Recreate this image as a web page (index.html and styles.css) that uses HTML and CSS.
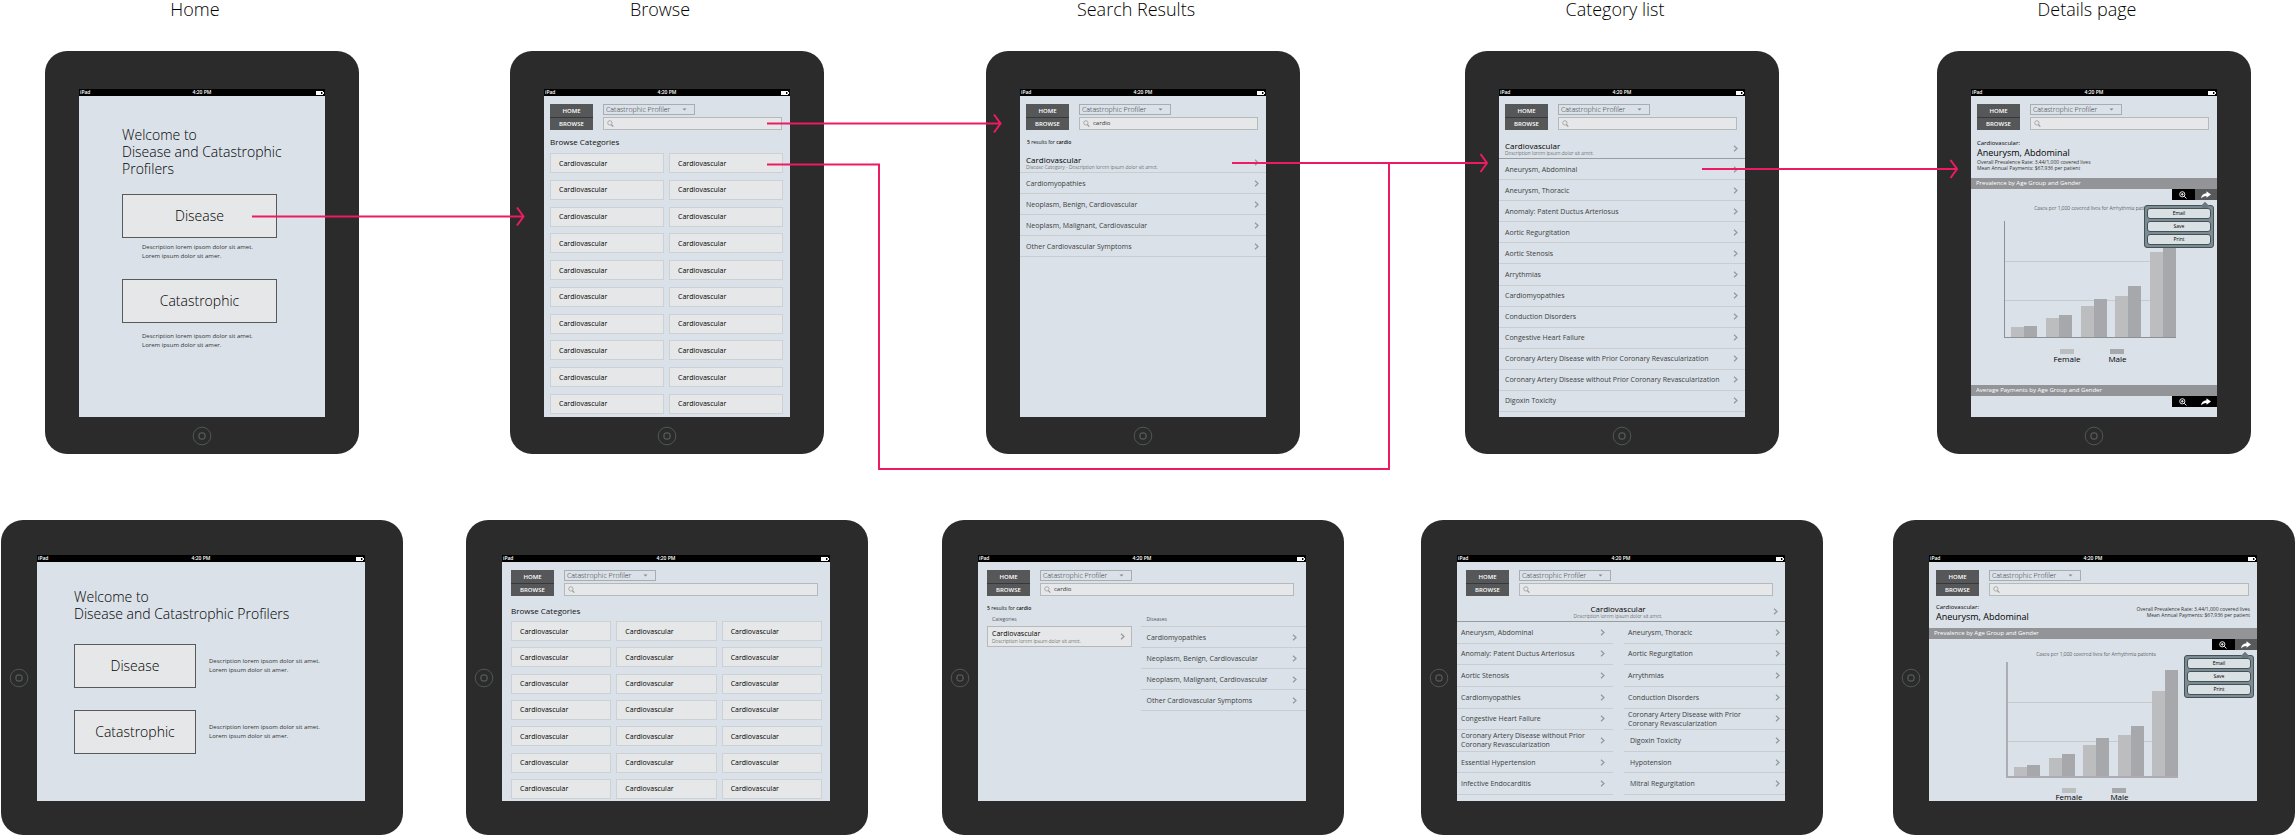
FILE: index.html
```html
<!DOCTYPE html>
<html lang="en">
<head>
<meta charset="utf-8">
<title>Profiler screen flow</title>
<link rel="stylesheet" href="styles.css">
</head>
<body>
<svg class="sprite" aria-hidden="true">
  <symbol id="chevron" viewBox="0 0 5 7"><path d="M1 .8 4 3.5 1 6.2" fill="none" stroke="currentColor" stroke-width="1.200"/></symbol>
  <symbol id="caret" viewBox="0 0 5 3"><path d="M.5 .5H4.500L2.500 2.500Z" fill="currentColor"/></symbol>
  <symbol id="search" viewBox="0 0 8 8"><circle cx="3.300" cy="3.300" r="2.500" fill="none" stroke="currentColor" stroke-width=".8"/><path d="M5 5.200 7.200 7.500" stroke="currentColor" stroke-width="1.300"/></symbol>
  <symbol id="zoom" viewBox="0 0 8 8"><circle cx="3.300" cy="3.300" r="2.600" fill="none" stroke="currentColor" stroke-width=".9"/><path d="M2 3.300H4.600M3.300 2V4.600M5.200 5.200 7.500 7.500" fill="none" stroke="currentColor" stroke-width=".9"/></symbol>
  <symbol id="share" viewBox="0 0 10 8"><path d="M0 7.500C.4 4.200 2.300 2.300 5.500 2.200V.3L10 3.600 5.500 6.800V4.900C3.300 4.800 1.600 5.600 0 7.500Z" fill="currentColor"/></symbol>
  <symbol id="battery" viewBox="0 0 8 4"><path d="M0 0H7V1H8V3H7V4H0Z" fill="#fff"/><path d="M5 1H6.400V3H5Z" fill="#000"/></symbol>
  <symbol id="homekey" viewBox="0 0 20 20"><circle cx="10" cy="10" r="8.800" fill="none" stroke="#5c5f60" stroke-width=".8"/><rect x="7" y="7" width="6" height="6" rx="1.800" fill="none" stroke="#6d7071" stroke-width=".9"/></symbol>
</svg>
<main class="board">

  <section class="column">
    <h2 class="title">Home</h2>
    <article class="device portrait">
      <div class="screen">
        <div class="status"><span>iPad</span><time>4:20 PM</time><svg class="battery"><use href="#battery"/></svg></div>
        <div class="welcome">
          <h1>Welcome to<br>Disease and Catastrophic Profilers</h1>
          <div class="choice"><button type="button">Disease</button><p>Description lorem ipsom dolor sit amet.<br>Lorem ipsum dolor sit amer.</p></div>
          <div class="choice low"><button type="button">Catastrophic</button><p>Description lorem ipsom dolor sit amet.<br>Lorem ipsum dolor sit amer.</p></div>
        </div>
      </div>
      <svg class="homekey"><use href="#homekey"/></svg>
    </article>
    <article class="device landscape">
      <svg class="homekey"><use href="#homekey"/></svg>
      <div class="screen">
        <div class="status"><span>iPad</span><time>4:20 PM</time><svg class="battery"><use href="#battery"/></svg></div>
        <div class="welcome">
          <h1>Welcome to<br>Disease and Catastrophic Profilers</h1>
          <div class="choice"><button type="button">Disease</button><p>Description lorem ipsom dolor sit amet.<br>Lorem ipsum dolor sit amer.</p></div>
          <div class="choice"><button type="button">Catastrophic</button><p>Description lorem ipsom dolor sit amet.<br>Lorem ipsum dolor sit amer.</p></div>
        </div>
      </div>
    </article>
  </section>

  <section class="column">
    <h2 class="title">Browse</h2>
    <article class="device portrait">
      <div class="screen">
        <div class="status"><span>iPad</span><time>4:20 PM</time><svg class="battery"><use href="#battery"/></svg></div>
        <header class="top">
          <nav><button type="button">HOME</button><button type="button">BROWSE</button></nav>
          <div class="finder"><div class="picker"><select aria-label="Profiler"><option>Catastrophic Profiler</option></select><svg><use href="#caret"/></svg></div><label class="search"><svg><use href="#search"/></svg><input type="text" aria-label="Search"></label></div>
        </header>
        <h3 class="heading">Browse Categories</h3>
        <div class="tiles">
          <button type="button">Cardiovascular</button><button type="button">Cardiovascular</button>
          <button type="button">Cardiovascular</button><button type="button">Cardiovascular</button>
          <button type="button">Cardiovascular</button><button type="button">Cardiovascular</button>
          <button type="button">Cardiovascular</button><button type="button">Cardiovascular</button>
          <button type="button">Cardiovascular</button><button type="button">Cardiovascular</button>
          <button type="button">Cardiovascular</button><button type="button">Cardiovascular</button>
          <button type="button">Cardiovascular</button><button type="button">Cardiovascular</button>
          <button type="button">Cardiovascular</button><button type="button">Cardiovascular</button>
          <button type="button">Cardiovascular</button><button type="button">Cardiovascular</button>
          <button type="button">Cardiovascular</button><button type="button">Cardiovascular</button>
        </div>
      </div>
      <svg class="homekey"><use href="#homekey"/></svg>
    </article>
    <article class="device landscape">
      <svg class="homekey"><use href="#homekey"/></svg>
      <div class="screen">
        <div class="status"><span>iPad</span><time>4:20 PM</time><svg class="battery"><use href="#battery"/></svg></div>
        <header class="top">
          <nav><button type="button">HOME</button><button type="button">BROWSE</button></nav>
          <div class="finder"><div class="picker"><select aria-label="Profiler"><option>Catastrophic Profiler</option></select><svg><use href="#caret"/></svg></div><label class="search"><svg><use href="#search"/></svg><input type="text" aria-label="Search"></label></div>
        </header>
        <h3 class="heading">Browse Categories</h3>
        <div class="tiles">
          <button type="button">Cardiovascular</button><button type="button">Cardiovascular</button><button type="button">Cardiovascular</button>
          <button type="button">Cardiovascular</button><button type="button">Cardiovascular</button><button type="button">Cardiovascular</button>
          <button type="button">Cardiovascular</button><button type="button">Cardiovascular</button><button type="button">Cardiovascular</button>
          <button type="button">Cardiovascular</button><button type="button">Cardiovascular</button><button type="button">Cardiovascular</button>
          <button type="button">Cardiovascular</button><button type="button">Cardiovascular</button><button type="button">Cardiovascular</button>
          <button type="button">Cardiovascular</button><button type="button">Cardiovascular</button><button type="button">Cardiovascular</button>
          <button type="button">Cardiovascular</button><button type="button">Cardiovascular</button><button type="button">Cardiovascular</button>
        </div>
      </div>
    </article>
  </section>

  <section class="column">
    <h2 class="title">Search Results</h2>
    <article class="device portrait">
      <div class="screen">
        <div class="status"><span>iPad</span><time>4:20 PM</time><svg class="battery"><use href="#battery"/></svg></div>
        <header class="top">
          <nav><button type="button">HOME</button><button type="button">BROWSE</button></nav>
          <div class="finder"><div class="picker"><select aria-label="Profiler"><option>Catastrophic Profiler</option></select><svg><use href="#caret"/></svg></div><label class="search"><svg><use href="#search"/></svg><input type="text" aria-label="Search" value="cardio"></label></div>
        </header>
        <p class="count"><b>5</b> results for <b>cardio</b></p>
        <div class="list">
          <a class="row lead" href="#"><span><strong>Cardiovascular</strong><small>Disease Category - Description lorem ipsum dolor sit amet.</small></span><svg><use href="#chevron"/></svg></a>
          <a class="row" href="#"><span>Cardiomyopathies</span><svg><use href="#chevron"/></svg></a>
          <a class="row" href="#"><span>Neoplasm, Benign, Cardiovascular</span><svg><use href="#chevron"/></svg></a>
          <a class="row" href="#"><span>Neoplasm, Malignant, Cardiovascular</span><svg><use href="#chevron"/></svg></a>
          <a class="row" href="#"><span>Other Cardiovascular Symptoms</span><svg><use href="#chevron"/></svg></a>
        </div>
      </div>
      <svg class="homekey"><use href="#homekey"/></svg>
    </article>
    <article class="device landscape">
      <svg class="homekey"><use href="#homekey"/></svg>
      <div class="screen">
        <div class="status"><span>iPad</span><time>4:20 PM</time><svg class="battery"><use href="#battery"/></svg></div>
        <header class="top">
          <nav><button type="button">HOME</button><button type="button">BROWSE</button></nav>
          <div class="finder"><div class="picker"><select aria-label="Profiler"><option>Catastrophic Profiler</option></select><svg><use href="#caret"/></svg></div><label class="search"><svg><use href="#search"/></svg><input type="text" aria-label="Search" value="cardio"></label></div>
        </header>
        <p class="count"><b>5</b> results for <b>cardio</b></p>
        <div class="results">
          <div class="group">
            <h4>Categories</h4>
            <a class="row lead card" href="#"><span><strong>Cardiovascular</strong><small>Description lorem ipsum dolor sit amet.</small></span><svg><use href="#chevron"/></svg></a>
          </div>
          <div class="group">
            <h4>Diseases</h4>
            <div class="list ruled">
              <a class="row" href="#"><span>Cardiomyopathies</span><svg><use href="#chevron"/></svg></a>
              <a class="row" href="#"><span>Neoplasm, Benign, Cardiovascular</span><svg><use href="#chevron"/></svg></a>
              <a class="row" href="#"><span>Neoplasm, Malignant, Cardiovascular</span><svg><use href="#chevron"/></svg></a>
              <a class="row" href="#"><span>Other Cardiovascular Symptoms</span><svg><use href="#chevron"/></svg></a>
            </div>
          </div>
        </div>
      </div>
    </article>
  </section>

  <section class="column">
    <h2 class="title">Category list</h2>
    <article class="device portrait">
      <div class="screen">
        <div class="status"><span>iPad</span><time>4:20 PM</time><svg class="battery"><use href="#battery"/></svg></div>
        <header class="top">
          <nav><button type="button">HOME</button><button type="button">BROWSE</button></nav>
          <div class="finder"><div class="picker"><select aria-label="Profiler"><option>Catastrophic Profiler</option></select><svg><use href="#caret"/></svg></div><label class="search"><svg><use href="#search"/></svg><input type="text" aria-label="Search"></label></div>
        </header>
        <a class="row lead category" href="#"><span><strong>Cardiovascular</strong><small>Description lorem ipsum dolor sit amet.</small></span><svg><use href="#chevron"/></svg></a>
        <div class="list full">
          <a class="row" href="#"><span>Aneurysm, Abdominal</span><svg><use href="#chevron"/></svg></a>
          <a class="row" href="#"><span>Aneurysm, Thoracic</span><svg><use href="#chevron"/></svg></a>
          <a class="row" href="#"><span>Anomaly: Patent Ductus Arteriosus</span><svg><use href="#chevron"/></svg></a>
          <a class="row" href="#"><span>Aortic Regurgitation</span><svg><use href="#chevron"/></svg></a>
          <a class="row" href="#"><span>Aortic Stenosis</span><svg><use href="#chevron"/></svg></a>
          <a class="row" href="#"><span>Arrythmias</span><svg><use href="#chevron"/></svg></a>
          <a class="row" href="#"><span>Cardiomyopathies</span><svg><use href="#chevron"/></svg></a>
          <a class="row" href="#"><span>Conduction Disorders</span><svg><use href="#chevron"/></svg></a>
          <a class="row" href="#"><span>Congestive Heart Failure</span><svg><use href="#chevron"/></svg></a>
          <a class="row" href="#"><span>Coronary Artery Disease with Prior Coronary Revascularization</span><svg><use href="#chevron"/></svg></a>
          <a class="row" href="#"><span>Coronary Artery Disease without Prior Coronary Revascularization</span><svg><use href="#chevron"/></svg></a>
          <a class="row" href="#"><span>Digoxin Toxicity</span><svg><use href="#chevron"/></svg></a>
        </div>
      </div>
      <svg class="homekey"><use href="#homekey"/></svg>
    </article>
    <article class="device landscape">
      <svg class="homekey"><use href="#homekey"/></svg>
      <div class="screen">
        <div class="status"><span>iPad</span><time>4:20 PM</time><svg class="battery"><use href="#battery"/></svg></div>
        <header class="top">
          <nav><button type="button">HOME</button><button type="button">BROWSE</button></nav>
          <div class="finder"><div class="picker"><select aria-label="Profiler"><option>Catastrophic Profiler</option></select><svg><use href="#caret"/></svg></div><label class="search"><svg><use href="#search"/></svg><input type="text" aria-label="Search"></label></div>
        </header>
        <a class="row lead category" href="#"><span><strong>Cardiovascular</strong><small>Description lorem ipsum dolor sit amet.</small></span><svg><use href="#chevron"/></svg></a>
        <div class="list full pair">
          <a class="row" href="#"><span>Aneurysm, Abdominal</span><svg><use href="#chevron"/></svg></a>
          <a class="row" href="#"><span>Aneurysm, Thoracic</span><svg><use href="#chevron"/></svg></a>
          <a class="row" href="#"><span>Anomaly: Patent Ductus Arteriosus</span><svg><use href="#chevron"/></svg></a>
          <a class="row" href="#"><span>Aortic Regurgitation</span><svg><use href="#chevron"/></svg></a>
          <a class="row" href="#"><span>Aortic Stenosis</span><svg><use href="#chevron"/></svg></a>
          <a class="row" href="#"><span>Arrythmias</span><svg><use href="#chevron"/></svg></a>
          <a class="row" href="#"><span>Cardiomyopathies</span><svg><use href="#chevron"/></svg></a>
          <a class="row" href="#"><span>Conduction Disorders</span><svg><use href="#chevron"/></svg></a>
          <a class="row" href="#"><span>Congestive Heart Failure</span><svg><use href="#chevron"/></svg></a>
          <a class="row" href="#"><span>Coronary Artery Disease with Prior<br>Coronary Revascularization</span><svg><use href="#chevron"/></svg></a>
          <a class="row" href="#"><span>Coronary Artery Disease without Prior<br>Coronary Revascularization</span><svg><use href="#chevron"/></svg></a>
          <a class="row inset" href="#"><span>Digoxin Toxicity</span><svg><use href="#chevron"/></svg></a>
          <a class="row" href="#"><span>Essential Hypertension</span><svg><use href="#chevron"/></svg></a>
          <a class="row inset" href="#"><span>Hypotension</span><svg><use href="#chevron"/></svg></a>
          <a class="row" href="#"><span>Infective Endocarditis</span><svg><use href="#chevron"/></svg></a>
          <a class="row inset" href="#"><span>Mitral Regurgitation</span><svg><use href="#chevron"/></svg></a>
        </div>
      </div>
    </article>
  </section>

  <section class="column">
    <h2 class="title">Details page</h2>
    <article class="device portrait details">
      <div class="screen">
        <div class="status"><span>iPad</span><time>4:20 PM</time><svg class="battery"><use href="#battery"/></svg></div>
        <header class="top">
          <nav><button type="button">HOME</button><button type="button">BROWSE</button></nav>
          <div class="finder"><div class="picker"><select aria-label="Profiler"><option>Catastrophic Profiler</option></select><svg><use href="#caret"/></svg></div><label class="search"><svg><use href="#search"/></svg><input type="text" aria-label="Search"></label></div>
        </header>
        <div class="summary">
          <h3><small>Cardiovascular:</small>Aneurysm, Abdominal</h3>
          <p>Overall Prevalence Rate: 3.44/1,000 covered lives<br>Mean Annual Payments: $67,936 per patient</p>
        </div>
        <h4 class="band">Prevalence by Age Group and Gender</h4>
        <div class="tools">
          <button type="button" aria-label="Zoom"><svg class="zoom"><use href="#zoom"/></svg></button><button type="button" class="on" aria-label="Share"><svg class="share"><use href="#share"/></svg></button>
          <div class="menu"><button type="button">Email</button><button type="button">Save</button><button type="button">Print</button></div>
        </div>
        <figure class="chart">
          <figcaption>Cases per 1,000 covered lives for Arrhythmia patients</figcaption>
          <div class="plot">
            <div class="bars"><i style="height:10px"></i><i style="height:11px"></i></div>
            <div class="bars"><i style="height:19px"></i><i style="height:22px"></i></div>
            <div class="bars"><i style="height:31px"></i><i style="height:38px"></i></div>
            <div class="bars"><i style="height:41px"></i><i style="height:51px"></i></div>
            <div class="bars"><i style="height:85px"></i><i style="height:106px"></i></div>
          </div>
          <div class="legend"><span>Female</span><span>Male</span></div>
        </figure>
        <h4 class="band">Average Payments by Age Group and Gender</h4>
        <div class="tools">
          <button type="button" aria-label="Zoom"><svg class="zoom"><use href="#zoom"/></svg></button><button type="button" aria-label="Share"><svg class="share"><use href="#share"/></svg></button>
        </div>
      </div>
      <svg class="homekey"><use href="#homekey"/></svg>
    </article>
    <article class="device landscape details">
      <svg class="homekey"><use href="#homekey"/></svg>
      <div class="screen">
        <div class="status"><span>iPad</span><time>4:20 PM</time><svg class="battery"><use href="#battery"/></svg></div>
        <header class="top">
          <nav><button type="button">HOME</button><button type="button">BROWSE</button></nav>
          <div class="finder"><div class="picker"><select aria-label="Profiler"><option>Catastrophic Profiler</option></select><svg><use href="#caret"/></svg></div><label class="search"><svg><use href="#search"/></svg><input type="text" aria-label="Search"></label></div>
        </header>
        <div class="summary">
          <h3><small>Cardiovascular:</small>Aneurysm, Abdominal</h3>
          <p>Overall Prevalence Rate: 3.44/1,000 covered lives<br>Mean Annual Payments: $67,936 per patient</p>
        </div>
        <h4 class="band">Prevalence by Age Group and Gender</h4>
        <div class="tools">
          <button type="button" aria-label="Zoom"><svg class="zoom"><use href="#zoom"/></svg></button><button type="button" class="on" aria-label="Share"><svg class="share"><use href="#share"/></svg></button>
          <div class="menu"><button type="button">Email</button><button type="button">Save</button><button type="button">Print</button></div>
        </div>
        <figure class="chart">
          <figcaption>Cases per 1,000 covered lives for Arrhythmia patients</figcaption>
          <div class="plot">
            <div class="bars"><i style="height:9px"></i><i style="height:11px"></i></div>
            <div class="bars"><i style="height:18px"></i><i style="height:22px"></i></div>
            <div class="bars"><i style="height:31px"></i><i style="height:38px"></i></div>
            <div class="bars"><i style="height:41px"></i><i style="height:50px"></i></div>
            <div class="bars"><i style="height:85px"></i><i style="height:106px"></i></div>
          </div>
          <div class="legend"><span>Female</span><span>Male</span></div>
        </figure>
      </div>
    </article>
  </section>

  <svg class="arrows" viewBox="0 0 2296 480" preserveAspectRatio="none" aria-hidden="true">
    <path d="M252 216.500H523M517 207.500 523.500 216.500 517 225.500"/>
    <path d="M767 123.500H1000M994 114.500 1000.500 123.500 994 132.500"/>
    <path d="M767 164.500H879V469H1389V163"/>
    <path d="M1232 163H1487M1480.500 154 1487 163 1480.500 172"/>
    <path d="M1702 169H1957M1950.500 160 1957 169 1950.500 178"/>
  </svg>
</main>
</body>
</html>
```
FILE: styles.css
```css
* { box-sizing: border-box; }
body { margin: 0; background: #fff; color: #111; font-family: "Open Sans", "Noto Sans", sans-serif; font-size: 7px; }
h1, h2, h3, h4, p, figure { margin: 0; font-weight: 400; }
button, select, input { margin: 0; padding: 0; border: 0; border-radius: 0; font: inherit; color: inherit; background: none; }
a { color: inherit; text-decoration: none; }
svg { display: block; flex: none; }
.sprite { position: absolute; width: 0; height: 0; }

/* Board: one column per screen, connectors drawn over it */
.board { position: relative; display: grid; grid-template-columns: 465fr 476fr 479fr 472fr 403fr; padding-left: 1px; min-width: 2100px; }
.column { display: flex; flex-direction: column; align-items: center; width: 402px; }
.title { padding-right: 14px; margin-bottom: 33px; font-size: 18px; line-height: 18px; font-weight: 300; color: #000; }
.arrows { position: absolute; top: 0; left: 0; width: 100%; height: 480px; pointer-events: none; }
.arrows path { fill: none; stroke: #ec1b63; stroke-width: 2; }

/* Tablets */
.device { display: flex; align-items: center; background: #2b2b2b; border-radius: 22px; }
.portrait { flex-direction: column; width: 314px; padding: 38px 34px 8px; margin-bottom: 66px; }
.landscape { width: 402px; padding: 35px 38px 34px 8px; }
.homekey { width: 20px; height: 20px; }
.portrait .homekey { margin-top: 9px; }
.landscape .homekey { margin-right: 8px; }
.screen { display: flex; flex-direction: column; width: 100%; height: 328px; background: #dae1e8; overflow: hidden; }
.landscape .screen { flex: 1; width: auto; height: 246px; }
.status { display: grid; grid-template-columns: 1fr auto 1fr; align-items: center; flex: none; height: 7px; padding: 0 1px; background: #000; color: #fff; font-size: 5px; line-height: 7px; font-weight: 600; }
.battery { width: 8px; height: 4px; justify-self: end; }

/* Home */
.welcome { padding: 30px 30px 0 43px; color: #000; }
.welcome h1 { margin-bottom: 17px; font-size: 14px; line-height: 17px; font-weight: 300; }
.choice button { display: block; width: 155px; height: 44px; padding-bottom: 1px; border: 1px solid #58595b; background: #e6e7e8; font-size: 14px; font-weight: 300; text-align: center; }
.choice p { font-size: 6px; line-height: 9px; color: #333; }
.portrait .choice p { padding: 5px 0 0 20px; }
.portrait .choice.low { margin-top: 18px; }
.portrait .choice.low p { padding-top: 9px; }
.landscape .welcome { padding: 26px 20px 0 37px; }
.landscape .welcome h1 { margin-bottom: 22px; }
.landscape .choice { display: flex; align-items: center; gap: 13px; margin-bottom: 22px; }
.landscape .choice button { width: 122px; }

/* Shared top bar */
.top { display: flex; gap: 10px; padding: 8px 8px 0 6px; }
.landscape .top { padding: 8px 12px 0 9px; }
.landscape.details .top { padding: 8px 8px 0 7px; }
.top nav { width: 43px; }
.top nav button { display: block; width: 100%; height: 13px; background: #565759; color: #fff; font-size: 6px; line-height: 12px; font-weight: 600; text-align: center; }
.top nav button + button { border-top: 1px solid #37383a; }
.finder { display: flex; flex: 1; flex-direction: column; justify-content: space-between; }
.picker { position: relative; width: 92px; height: 11px; }
.picker select { width: 100%; height: 100%; padding-left: 2px; border: 1px solid #a8adb1; appearance: none; font-size: 7px; line-height: 9px; font-weight: 300; color: #34383b; }
.picker svg { position: absolute; right: 8px; top: 4px; width: 5px; height: 3px; color: #85898c; }
.search { display: flex; align-items: center; gap: 3px; height: 13px; padding: 0 3px; border: 1px solid #b5b9bc; background: #e6e7e8; }
.search svg { width: 7px; height: 7px; color: #8f9396; }
.search input { flex: 1; min-width: 0; font-size: 6px; line-height: 9px; outline: 0; color: #333; }

/* Browse */
.heading { padding: 7px 0 0 6px; font-size: 8px; line-height: 10px; }
.tiles { display: grid; flex: 1; grid-template-columns: 1fr 1fr; grid-auto-rows: 20px; align-content: space-between; column-gap: 5px; padding: 6px 7px 3px 6px; }
.tiles button { padding-left: 8px; border: 1px solid #ced1d4; background: #e6e7e8; line-height: 9px; text-align: left; color: #000; }
.landscape .heading { padding: 10px 0 0 9px; }
.landscape .tiles { grid-template-columns: 1fr 1fr 1fr; padding: 5px 8px 2px 9px; }

/* Rows */
.row { display: flex; align-items: center; justify-content: space-between; min-height: 21px; padding: 0 7px 0 6px; border-bottom: 1px solid #c9cdd0; line-height: 9px; color: #3c3f42; }
.row svg { width: 5px; height: 7px; color: #94989b; }
.lead strong, .lead small { display: block; font-weight: 400; }
.lead strong { font-size: 8px; line-height: 9px; color: #000; }
.lead small { font-size: 5px; line-height: 6px; font-weight: 300; color: #33373a; }
.count { padding: 8px 0 5px 7px; font-size: 5px; line-height: 9px; }
.count b { font-weight: 600; }
.landscape .count { padding: 8px 0 0 9px; }
.category { flex: none; margin-top: 8px; border-color: #9a9da0; }
.landscape .category { margin-top: 5px; }
.landscape .category span { flex: 1; text-align: center; }
.full { display: grid; flex: 1; grid-auto-rows: 1fr; padding-bottom: 5px; }
.pair { grid-template-columns: 156fr 161fr; column-gap: 11px; padding-bottom: 6px; }
.pair .row { padding: 0 5px 0 4px; }
.pair .row:nth-child(odd) { padding-right: 8px; }
.pair .row.inset { padding-left: 6px; }
.results { display: grid; grid-template-columns: 145fr 164fr; column-gap: 9px; padding-left: 9px; }
.group h4 { padding: 2px 0 2px 5px; font-size: 5px; line-height: 9px; color: #55585b; }
.ruled { border-top: 1px solid #c9cdd0; }
.ruled .row { padding: 0 9px 0 5px; }
.card { border: 1px solid #b5b9bc; background: #e6e7e8; padding: 0 6px 0 4px; }
.card strong { font-size: 7px; }

/* Details */
.summary { padding: 9px 6px 5px; }
.summary h3 { font-size: 9px; line-height: 11px; color: #000; }
.summary small { display: block; font-size: 6px; line-height: 8px; }
.summary p { padding: 1px 0 2px; font-size: 5px; line-height: 6px; color: #333; }
.landscape .summary { display: flex; align-items: center; justify-content: space-between; padding: 7px 7px 6px; }
.landscape .summary p { text-align: right; }
.band { flex: none; padding-left: 5px; background: #939498; color: #fff; font-size: 6px; line-height: 11px; }
.tools { position: relative; display: flex; flex: none; align-self: flex-end; width: 45px; height: 11px; }
.tools > button { display: flex; flex: 1; align-items: center; justify-content: center; background: #000; color: #fff; }
.tools > .on { background: #58595b; }
.zoom { width: 8px; height: 8px; }
.share { width: 10px; height: 8px; }
.menu { position: absolute; z-index: 1; top: 16px; right: 3px; display: grid; gap: 2px; width: 70px; padding: 2px; border: 1px solid #465155; border-radius: 3px; background: #7c8c94; }
.menu::before { content: ""; position: absolute; top: -3px; right: 5px; width: 6px; height: 6px; background: #6a787f; transform: rotate(45deg); }
.menu button { position: relative; height: 11px; border: 1px solid #465155; border-radius: 3px; background: #dae1e4; font-size: 5px; line-height: 9px; text-align: center; color: #000; }
.chart { width: 172px; margin: 0 40px 0 33px; }
.chart figcaption { padding: 4px 0 8px; margin-right: -8px; font-size: 5px; line-height: 9px; font-weight: 300; text-align: center; white-space: nowrap; color: #111; }
.plot { display: flex; align-items: flex-end; justify-content: space-between; height: 117px; padding-left: 6px; border: solid #8d9094; border-width: 0 0 1px 1px; background: linear-gradient(#c6cacd, #c6cacd) 0 40px / 100% 1px no-repeat, linear-gradient(#c6cacd, #c6cacd) 0 79px / 100% 1px no-repeat; }
.bars { display: flex; align-items: flex-end; }
.bars i { width: 13px; background: #bcbdbf; }
.bars i + i { background: #a7a8ac; }
.legend { display: flex; justify-content: center; gap: 28px; padding: 11px 0 22px; font-size: 8px; line-height: 9px; color: #000; }
.legend span::before { content: ""; display: block; width: 14px; height: 5px; margin: 0 auto; background: #bcbdbf; }
.legend span + span::before { background: #a7a8ac; }
.landscape .chart { margin: 0 80px 0 77px; }
.landscape .chart figcaption { padding: 0 0 3px; }
.landscape .plot { height: 116px; border-width: 0 0 2px 2px; border-color: #abadb3; }
.landscape .legend { padding: 10px 0 0; line-height: 8px; }
```
